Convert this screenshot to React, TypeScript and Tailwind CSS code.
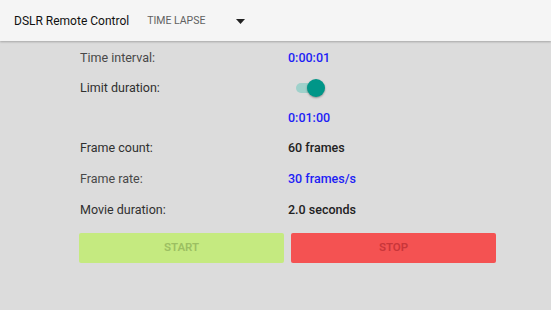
import React from 'react';

const App: React.FC = () => {
  return (
    <div
      className="w-[551px] h-[310px] bg-[#dcdcdc] overflow-hidden"
      style={{ fontFamily: 'Roboto, "Liberation Sans", sans-serif' }}
    >
      <div className="h-[41px] bg-[#f5f5f5] flex items-center shadow-[0_1px_2px_rgba(0,0,0,0.25)] relative">
        <span className="ml-[14px] text-[12px] text-[#111111]">DSLR Remote Control</span>
        <span className="ml-[18px] text-[10.5px] text-[#616161]">TIME LAPSE</span>
        <svg className="ml-[31px] mt-px" width="9" height="5" viewBox="0 0 9 5">
          <path d="M0 0h9L4.5 5z" fill="#212121" />
        </svg>
      </div>

      <div className="ml-[79px] w-[417px] text-[12.5px] pt-[2px]">
        <div className="h-[30px] grid grid-cols-[209px_1fr] items-center">
          <span className="pl-px text-[#484848]">Time interval:</span>
          <span className="font-medium text-[#1e1ef5]">0:00:01</span>
        </div>

        <div className="h-[30px] grid grid-cols-[209px_1fr] items-center">
          <span className="pl-px text-[#303030]">Limit duration:</span>
          <div className="relative ml-[8px] w-[29px] h-[18px] flex items-center">
            <div className="w-[25px] h-[10px] rounded-full bg-[#9fd1cb]" />
            <div className="absolute right-0 top-0 w-[18px] h-[18px] rounded-full bg-[#009688] shadow-[0_1px_2px_rgba(0,0,0,0.35)]" />
          </div>
        </div>

        <div className="h-[30px] grid grid-cols-[209px_1fr] items-center">
          <span />
          <span className="font-medium text-[#1e1ef5]">0:01:00</span>
        </div>

        <div className="h-[31px] grid grid-cols-[209px_1fr] items-center">
          <span className="pl-px text-[#303030]">Frame count:</span>
          <span className="font-medium text-[#222222]">60 frames</span>
        </div>

        <div className="h-[31px] grid grid-cols-[209px_1fr] items-center">
          <span className="pl-px text-[#484848]">Frame rate:</span>
          <span className="font-medium text-[#1e1ef5]">30 frames/s</span>
        </div>

        <div className="h-[31px] grid grid-cols-[209px_1fr] items-center">
          <span className="pl-px text-[#303030]">Movie duration:</span>
          <span className="font-medium text-[#222222]">2.0 seconds</span>
        </div>

        <div className="mt-[7px] flex gap-[7px]">
          <button className="w-[205px] h-[30px] rounded-[2px] bg-[#c5ea80] text-[11.5px] font-semibold text-[#9cbf62]">
            START
          </button>
          <button className="w-[205px] h-[30px] rounded-[2px] bg-[#f45252] text-[11.5px] font-semibold text-[#c9363a]">
            STOP
          </button>
        </div>
      </div>
    </div>
  );
};

export default App;
